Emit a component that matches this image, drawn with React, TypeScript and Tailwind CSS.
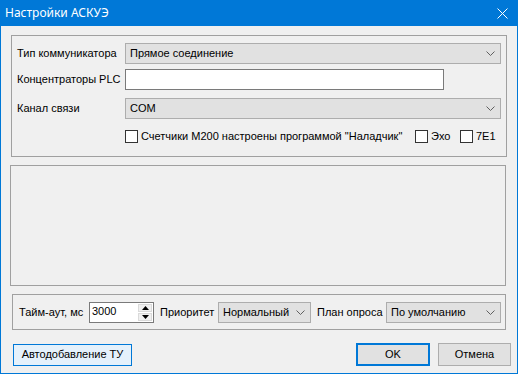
function Chevron() {
  return (
    <svg width="9" height="5" viewBox="0 0 9 5" className="shrink-0">
      <path d="M0.5 0.5 L4.5 4.5 L8.5 0.5" fill="none" stroke="#606060" strokeWidth="1" />
    </svg>
  )
}

function Combo({ value, className }: { value: string; className: string }) {
  return (
    <div
      className={`flex items-center justify-between h-[21px] pl-[4px] pr-[5px] bg-[#e1e1e1] border border-[#adadad] ${className}`}
    >
      <span>{value}</span>
      <Chevron />
    </div>
  )
}

function Check({ label, className = "" }: { label: string; className?: string }) {
  return (
    <div className={`flex items-center gap-[3px] ${className}`}>
      <div className="w-[13px] h-[13px] shrink-0 bg-white border border-[#333333]" />
      <span className="whitespace-nowrap">{label}</span>
    </div>
  )
}

function Spin() {
  return (
    <div className="flex h-[21px] w-[65px] bg-white border border-[#7a7a7a]">
      <span className="flex-1 pl-[2px] leading-[17px]">3000</span>
      <div className="flex flex-col gap-[1px] w-[15px] py-[1px] pr-[1px]">
        <div className="flex-1 flex items-center justify-center bg-[#f0f0f0] border border-[#dadada]">
          <svg width="7" height="4" viewBox="0 0 7 4">
            <path d="M0 4 L3.5 0 L7 4 Z" fill="#000" />
          </svg>
        </div>
        <div className="flex-1 flex items-center justify-center bg-[#f0f0f0] border border-[#dadada]">
          <svg width="7" height="4" viewBox="0 0 7 4">
            <path d="M0 0 L3.5 4 L7 0 Z" fill="#000" />
          </svg>
        </div>
      </div>
    </div>
  )
}

export default function App() {
  return (
    <div
      className="w-[518px] h-[374px] flex flex-col bg-[#0078d7] text-[11px] text-black"
      style={{ fontFamily: '"Liberation Sans", Arial, sans-serif' }}
    >
      <div className="h-[26px] flex items-center justify-between pl-[5px] pr-[10px] text-white">
        <span className="text-[12px]" style={{ fontFamily: '"Noto Sans", "Open Sans", sans-serif' }}>
          Настройки АСКУЭ
        </span>
        <svg width="11" height="11" viewBox="0 0 11 11">
          <path d="M0.5 0.5 L10.5 10.5 M10.5 0.5 L0.5 10.5" stroke="#fff" strokeWidth="1" />
        </svg>
      </div>

      <div className="flex-1 mx-[1px] mb-[1px] bg-[#f0f0f0] flex flex-col">
        {/* communicator settings */}
        <div className="mt-[9px] ml-[10px] w-[496px] h-[122px] border border-[#a0a0a0] pt-[7px] pl-[5px] flex flex-col">
          <div className="flex items-center h-[21px]">
            <span className="w-[108px]">Тип коммуникатора</span>
            <Combo value="Прямое соединение" className="w-[376px]" />
          </div>
          <div className="flex items-center h-[21px] mt-[5px]">
            <span className="w-[108px]">Концентраторы PLC</span>
            <div className="w-[319px] h-[21px] bg-white border border-[#7a7a7a]" />
          </div>
          <div className="flex items-center h-[21px] mt-[8px]">
            <span className="w-[108px]">Канал связи</span>
            <Combo value="COM" className="w-[376px]" />
          </div>
          <div className="flex items-center h-[13px] mt-[11px] pl-[108px]">
            <Check label={'Счетчики М200 настроены программой "Наладчик"'} className="w-[290px]" />
            <Check label="Эхо" className="w-[45px]" />
            <Check label="7E1" />
          </div>
        </div>

        {/* empty panel */}
        <div className="mt-[8px] ml-[9px] w-[496px] h-[121px] border border-[#a0a0a0]" />

        {/* polling */}
        <div className="mt-[8px] ml-[11px] w-[494px] h-[36px] border border-[#a0a0a0] pl-[6px] flex items-center">
          <span className="w-[70px]">Тайм-аут, мс</span>
          <Spin />
          <span className="ml-[6px] w-[58px]">Приоритет</span>
          <Combo value="Нормальный" className="w-[93px]" />
          <span className="ml-[6px] w-[69px]">План опроса</span>
          <Combo value="По умолчанию" className="w-[115px]" />
        </div>

        <div className="mt-[13px] flex items-center">
          <button className="ml-[12px] w-[119px] h-[22px] bg-[#e5f1fb] border border-[#0078d7]">
            Автодобавление ТУ
          </button>
          <button className="ml-[224px] w-[74px] h-[23px] bg-[#e1e1e1] border-2 border-[#0078d7]">
            OK
          </button>
          <button className="ml-[8px] w-[73px] h-[23px] bg-[#e1e1e1] border border-[#adadad]">
            Отмена
          </button>
        </div>
      </div>
    </div>
  )
}
